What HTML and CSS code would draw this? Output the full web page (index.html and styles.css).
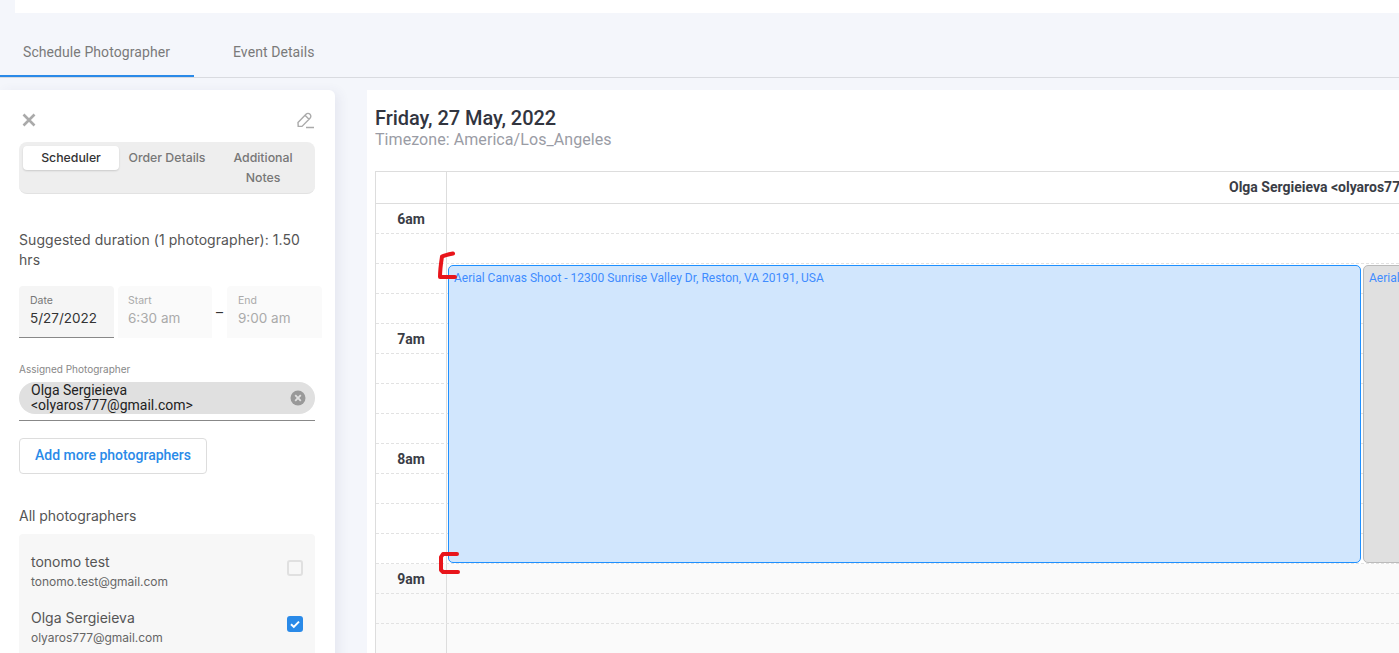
FILE: index.html
```html
<!DOCTYPE html>
<html>
<head>
<meta charset="UTF-8"/>
<title>Schedule Photographer</title>
<link rel="stylesheet" href="styles.css">
</head>
<body>
<div class="topbar"></div>
<div class="tabs">
  <div class="tab active">Schedule Photographer</div>
  <div class="tab">Event Details</div>
</div>
<div class="main">
  <div class="sidebar">
    <div class="side-tools">
      <svg class="ico-close" width="14" height="14" viewBox="0 0 14 14"><path d="M1.5 1.5L12.5 12.5M12.5 1.5L1.5 12.5" stroke="#aaa" stroke-width="2.6" fill="none"/></svg>
      <svg class="ico-edit" width="18" height="18" viewBox="0 0 18 18"><path d="M2 11.5L10 3.2a2.8 2.8 0 0 1 4 0a2.8 2.8 0 0 1 0 4L6 15.4H2.2zM9 4.300l4 4M10 16.500h8" stroke="#aaa" stroke-width="1.400" fill="none"/></svg>
    </div>
    <div class="segment">
      <div class="seg on">Scheduler</div>
      <div class="seg">Order Details</div>
      <div class="seg">Additional Notes</div>
    </div>
    <p class="suggest">Suggested duration (1 photographer): 1.50 hrs</p>
    <div class="fields">
      <div class="field date"><label>Date</label><span>5/27/2022</span></div>
      <div class="field off"><label>Start</label><span>6:30 am</span></div>
      <div class="dash">–</div>
      <div class="field off end"><label>End</label><span>9:00 am</span></div>
    </div>
    <div class="assigned">
      <label>Assigned Photographer</label>
      <div class="chip-line">
        <div class="chip">
          <span>Olga Sergieieva &lt;olyaros777@gmail.com&gt;</span>
          <svg width="16" height="16" viewBox="0 0 16 16"><circle cx="8" cy="8" r="7.5" fill="#999"/><path d="M5.2 5.2l5.6 5.6M10.800 5.200l-5.600 5.600" stroke="#e0e0e0" stroke-width="1.8"/></svg>
        </div>
      </div>
    </div>
    <button class="add-btn">Add more photographers</button>
    <div class="all-title">All photographers</div>
    <div class="people">
      <div class="person">
        <div><div class="p-name">tonomo test</div><div class="p-mail">tonomo.test@gmail.com</div></div>
        <div class="check"></div>
      </div>
      <div class="person">
        <div><div class="p-name">Olga Sergieieva</div><div class="p-mail">olyaros777@gmail.com</div></div>
        <div class="check on"><svg width="16" height="16" viewBox="0 0 16 16"><path d="M4 8.300l2.800 2.600L12 5.600" stroke="#fff" stroke-width="2" fill="none"/></svg></div>
      </div>
    </div>
  </div>
  <div class="calendar">
    <h2>Friday, 27 May, 2022</h2>
    <div class="tz">Timezone: America/Los_Angeles</div>
    <div class="grid">
      <div class="row head"><div class="time"></div><div class="slot">Olga Sergieieva &lt;olyaros777@gmail.com&gt;</div></div>
      <div class="row"><div class="time">6am</div><div class="slot"></div></div>
      <div class="row"><div class="time"></div><div class="slot"></div></div>
      <div class="row"><div class="time"></div><div class="slot"></div></div>
      <div class="row"><div class="time"></div><div class="slot"></div></div>
      <div class="row"><div class="time">7am</div><div class="slot"></div></div>
      <div class="row"><div class="time"></div><div class="slot"></div></div>
      <div class="row"><div class="time"></div><div class="slot"></div></div>
      <div class="row"><div class="time"></div><div class="slot"></div></div>
      <div class="row"><div class="time">8am</div><div class="slot"></div></div>
      <div class="row"><div class="time"></div><div class="slot"></div></div>
      <div class="row"><div class="time"></div><div class="slot"></div></div>
      <div class="row"><div class="time"></div><div class="slot"></div></div>
      <div class="row late"><div class="time">9am</div><div class="slot"></div></div>
      <div class="row late"><div class="time"></div><div class="slot"></div></div>
      <div class="row late"><div class="time"></div><div class="slot"></div></div>
      <div class="event blue">Aerial Canvas Shoot - 12300 Sunrise Valley Dr, Reston, VA 20191, USA</div>
      <div class="event grey">Aerial Canvas Shoot - 12300 Sunrise Valley Dr, Reston, VA 20191, USA</div>
      <svg class="mark mark1" width="24" height="32" viewBox="0 0 24 32"><path d="M17 2.500C12 3.500 8 4.500 6 5.500C5 12 4 20 4 26H19" stroke="#e8151b" stroke-width="4" fill="none" stroke-linejoin="round" stroke-linecap="round"/></svg>
      <svg class="mark mark2" width="24" height="24" viewBox="0 0 24 24"><path d="M20 3H6L4 6V19L6 21H21" stroke="#e8151b" stroke-width="4" fill="none" stroke-linejoin="round" stroke-linecap="round"/></svg>
    </div>
  </div>
</div>
</body>
</html>
```

FILE: styles.css
```css
html, body{
  margin:0;
  padding:0;
  height:100%;
  overflow:hidden;
}
body{
  background:#f4f6fb;
  font-family:'Inter','Roboto',sans-serif;
  color:#333;
}
.topbar{
  height:13px;
  margin-left:15px;
  background:#fff;
}
.tabs{
  display:flex;
  height:64px;
  border-bottom:1px solid #d9dbe0;
  font-family:'Roboto',sans-serif;
  font-size:14px;
  letter-spacing:.08px;
  color:#7a7a7a;
}
.tab{
  box-sizing:border-box;
  height:64px;
  padding:0 24px 0 23px;
  line-height:78px;
  margin-right:16px;
}
.tab.active{
  border-bottom:2px solid #2a8ae8;
}
.main{
  display:flex;
  align-items:flex-start;
  padding-top:12px;
}

/* left panel */
.sidebar{
  box-sizing:border-box;
  flex:none;
  width:335px;
  height:600px;
  padding:0 20px 0 19px;
  background:#fff;
  border-radius:0 6px 6px 0;
  box-shadow:4px 2px 12px rgba(60,70,110,.08);
}
.side-tools{
  display:flex;
  justify-content:space-between;
  align-items:center;
  height:52px;
  padding:8px 1px 0 3px;
  box-sizing:border-box;
}
.segment{
  display:grid;
  grid-template-columns:96px 96px 96px;
  padding:4px;
  height:52px;
  box-sizing:border-box;
  background:#eee;
  border-radius:8px;
  border-bottom:1px solid #e2e2e2;
  font-size:12.3px;
  font-weight:500;
  line-height:20px;
  color:#777;
  text-align:center;
}
.seg{
  padding:2px 8px;
  height:24px;
  box-sizing:border-box;
}
.seg.on{
  background:#fff;
  color:#333;
  border-radius:4px;
  box-shadow:0 1px 2px rgba(0,0,0,.15);
}
.suggest{
  margin:36px 0 0;
  font-size:14px;
  line-height:20px;
  letter-spacing:.06px;
  color:#555;
}
.fields{
  display:flex;
  width:303px;
  margin-top:16px;
}
.field{
  box-sizing:border-box;
  width:95px;
  height:52px;
  padding:9px 11px;
  background:#f5f5f5;
  border-radius:4px 4px 0 0;
  border-bottom:1px solid #888;
  font-size:13.5px;
  color:#333;
}
.field label{
  display:block;
  font-size:10.5px;
  line-height:12px;
  color:#777;
  margin-bottom:1px;
}
.field span{
  line-height:20px;
}
.field.off{
  width:94px;
  margin-left:4px;
  padding-left:10px;
  background:#fafafa;
  border-bottom:none;
  color:#aaa;
}
.field.off label{
  color:#aaa;
}
.field.end{
  width:95px;
  margin-left:0;
  padding-left:11px;
}
.dash{
  width:15px;
  text-align:center;
  line-height:52px;
  font-size:14px;
}
.assigned{
  margin-top:25px;
}
.assigned label{
  display:block;
  font-size:10px;
  line-height:12px;
  color:#888;
  margin-bottom:7px;
}
.chip-line{
  padding-bottom:6px;
  border-bottom:1px solid #888;
}
.chip{
  display:flex;
  align-items:center;
  justify-content:space-between;
  box-sizing:border-box;
  height:32px;
  padding:0 9px 0 12px;
  background:#e0e0e0;
  border-radius:16px;
  font-family:'Roboto',sans-serif;
  font-size:14px;
  line-height:15px;
  color:#222;
}
.chip span{
  width:200px;
}
.add-btn{
  display:block;
  width:188px;
  height:36px;
  margin-top:17px;
  padding:0 0 2px;
  background:#fff;
  border:1px solid #ddd;
  border-radius:4px;
  font-family:'Roboto',sans-serif;
  font-size:14px;
  font-weight:500;
  color:#2a8ae8;
}
.all-title{
  margin-top:32px;
  font-size:14px;
  line-height:20px;
  letter-spacing:-.03px;
  color:#555;
}
.people{
  margin-top:8px;
  padding:9px 6px 0 12px;
  background:#f7f7f7;
  border-radius:4px;
  height:200px;
  box-sizing:border-box;
}
.person{
  display:flex;
  justify-content:space-between;
  align-items:center;
  height:56px;
  padding-right:6px;
}
.p-name{
  font-size:14px;
  line-height:20px;
  color:#555;
}
.p-mail{
  margin-top:1px;
  font-size:12px;
  line-height:18px;
  letter-spacing:-.03px;
  color:#666;
}
.check{
  box-sizing:border-box;
  width:16px;
  height:16px;
  margin-top:-6px;
  border:2px solid #e0e0e0;
  border-radius:3px;
}
.check.on{
  border:none;
  background:#2a8ae8;
}
.check svg{
  display:block;
}

/* calendar */
.calendar{
  flex:1;
  box-sizing:border-box;
  height:600px;
  margin-left:32px;
  padding:16px 0 0 8px;
  background:#fff;
  min-width:0;
}
.calendar h2{
  margin:0;
  font-family:'Roboto',sans-serif;
  font-size:20px;
  font-weight:500;
  line-height:24px;
  letter-spacing:-.05px;
  color:#32353f;
}
.tz{
  font-family:'Roboto',sans-serif;
  font-size:16px;
  line-height:20px;
  letter-spacing:.07px;
  color:#9a9ca5;
}
.grid{
  position:relative;
  margin-top:21px;
  border-top:1px solid #ddd;
  border-left:1px solid #ddd;
  font-family:'Roboto',sans-serif;
}
.row{
  display:flex;
  height:30px;
  box-sizing:border-box;
  border-bottom:1px dashed #e2e2e2;
}
.row.head{
  height:32px;
  border-bottom:1px solid #ddd;
}
.row.late{
  background:#fafafa;
}
.time{
  flex:none;
  box-sizing:border-box;
  width:71px;
  border-right:1px solid #ddd;
  font-size:14px;
  font-weight:700;
  line-height:30px;
  text-align:center;
  color:#3a3d46;
}
.slot{
  flex:1;
  min-width:0;
}
.head .slot{
  padding-left:782px;
  font-size:14px;
  font-weight:700;
  line-height:31px;
  white-space:nowrap;
  color:#3a3d46;
}
.event{
  position:absolute;
  top:93px;
  box-sizing:border-box;
  height:298px;
  padding:5px 5px;
  border-radius:5px;
  font-size:12px;
  line-height:15px;
  color:#3f8cff;
  white-space:nowrap;
  overflow:hidden;
}
.event.blue{
  left:72px;
  width:913px;
  background:#d1e6fd;
  border:1px solid #1e90ff;
}
.event.grey{
  left:987px;
  width:600px;
  background:#e0e0e0;
  border:1px solid #bbb;
}
.mark{
  position:absolute;
}
.mark1{
  left:60px;
  top:79px;
}
.mark2{
  left:61px;
  top:379px;
}
```
